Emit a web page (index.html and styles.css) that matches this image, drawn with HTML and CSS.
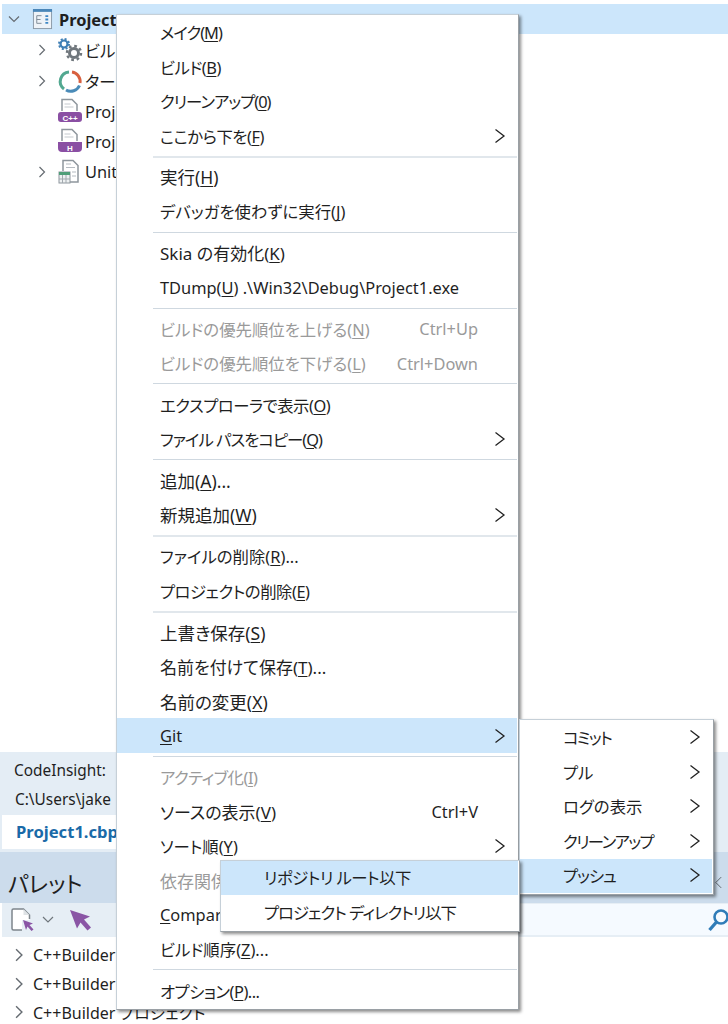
FILE: index.html
```html
<!DOCTYPE html>
<html lang="ja">
<head>
<meta charset="utf-8">
<title>Project context menu</title>
<link rel="stylesheet" href="styles.css">
</head>
<body>
<div class="page">
  <section class="tree">
    <div class="node node-selected">
      <svg class="chev chev-root" viewBox="0 0 12 12"><path d="M1 3.500l5 5 5-5"/></svg>
      <svg class="ico" viewBox="0 0 22 22"><rect x="1.500" y="1.500" width="19" height="19" fill="#eef3f8" stroke="#8b98a5"/><rect x="1" y="0" width="20" height="3" fill="#4a86b8"/><path d="M5 7h5M5 11h4M5 15h5M5 7v8" stroke="#7c8894" fill="none"/><path d="M14 6.500h3v2h-3zM14 10h3v2h-3zM14 13.500h3v2h-3z" fill="#3f88c5"/></svg>
      <span class="node-bold">Project1</span>
    </div>
    <div class="node">
      <svg class="chev" viewBox="0 0 12 12"><path d="M3.500 1l5 5-5 5"/></svg>
      <svg class="ico ico-wide" viewBox="0 0 26 24"><circle cx="7" cy="6" r="3.500" fill="none" stroke="#3f7fb5" stroke-width="2.200"/><circle cx="7" cy="6" r="5" fill="none" stroke="#3f7fb5" stroke-width="2" stroke-dasharray="2 1.930"/><circle cx="17" cy="15" r="4.500" fill="none" stroke="#6f767c" stroke-width="3"/><circle cx="17" cy="15" r="7" fill="none" stroke="#6f767c" stroke-width="2.500" stroke-dasharray="2.700 2.800"/></svg>
      <span class="label">ビルド構成</span>
    </div>
    <div class="node">
      <svg class="chev" viewBox="0 0 12 12"><path d="M3.500 1l5 5-5 5"/></svg>
      <svg class="ico ico-wide" viewBox="0 0 26 24"><g fill="none" stroke-width="3"><path d="M7 20A9.500 9.500 0 0 1 12 3" stroke="#52a890"/><path d="M15 3a9.500 9.500 0 0 1 8 11" stroke="#d8603f"/><path d="M22.500 16.500A9.500 9.500 0 0 1 9 21" stroke="#4a8bb8"/></g></svg>
      <span class="label">ターゲット</span>
    </div>
    <div class="node node-leaf">
      <svg class="ico ico-file" viewBox="0 0 26 26"><path d="M5 13V1.500h10l5 5V13" fill="#fff" stroke="#8e969d" stroke-width="1.500"/><path d="M7.500 6h6M7.500 9h9" stroke="#c4c9ce"/><rect x="1" y="14" width="24" height="10" rx="3" fill="#8a4fa3"/><text class="badge" x="13" y="22.500">C++</text></svg>
      <span class="label">Project1.cpp</span>
    </div>
    <div class="node node-leaf">
      <svg class="ico ico-file" viewBox="0 0 26 26"><path d="M5 13V1.500h10l5 5V13" fill="#fff" stroke="#8e969d" stroke-width="1.500"/><path d="M7.500 6h6M7.500 9h9" stroke="#c4c9ce"/><path d="M1 14h24v6a4 4 0 0 1-4 4H5a4 4 0 0 1-4-4z" fill="#8a4fa3"/><text class="badge" x="13" y="23">H</text></svg>
      <span class="label">Project1.h</span>
    </div>
    <div class="node">
      <svg class="chev" viewBox="0 0 12 12"><path d="M3.500 1l5 5-5 5"/></svg>
      <svg class="ico ico-file" viewBox="0 0 26 26"><path d="M6 12V1.500h10l5 5V23h-8" fill="#fff" stroke="#8e969d" stroke-width="1.500"/><path d="M9 5h5M9 8.500h9M15 13h4M15 17h4" stroke="#b5bbc1"/><rect x="2" y="13" width="11" height="11" fill="#eef1f2" stroke="#8e969d"/><rect x="2" y="13" width="11" height="3" fill="#4f9e78"/><path d="M5.500 16v8M9 16v8M2 20h11" stroke="#a2a9af"/></svg>
      <span class="label">Unit1.cpp</span>
    </div>
  </section>

  <section class="status">
    <div class="status-line">CodeInsight:</div>
    <div class="status-line status-path">C:\Users\jake</div>
    <div class="tab-row"><div class="tab">Project1.cbproj</div></div>
  </section>

  <section class="palette">
    <h2 class="palette-title">パレット</h2>
    <div class="palette-tools">
      <svg class="tool-new" viewBox="0 0 23 25"><path d="M12.500 1H2.500A1.500 1.500 0 0 0 1 2.500v18A1.500 1.500 0 0 0 2.500 22H11V12h7.500V7z" fill="#fff"/><path d="M11 22H2.500A1.500 1.500 0 0 1 1 20.500v-18A1.500 1.500 0 0 1 2.500 1h10l6 6v4" fill="none" stroke="#7d858c" stroke-width="1.500"/><path d="M12.500 1v6h6z" fill="#dfe3e6"/><path d="M12 12l10 3.500-3.500 1.500 4 4.500-2 1.500-4-4.500-1.500 3.500z" fill="#8a55a5"/></svg>
      <svg class="tool-drop" viewBox="0 0 12 8"><path d="M1 1l5 5 5-5"/></svg>
      <svg class="tool-arrow" viewBox="0 0 22 22"><path d="M1 1l20 6.500-6 3 7 8-3.500 3-7-8-3.500 6z" fill="#8a55a5"/></svg>
      <div class="search">
        <svg class="search-ico" viewBox="0 0 24 24"><circle cx="13" cy="9" r="6.500" fill="none" stroke="#2f7cb8" stroke-width="2.600"/><path d="M8.500 14l-7 8" stroke="#2f7cb8" stroke-width="3.400"/></svg>
      </div>
    </div>
    <ul class="groups">
      <li class="group"><svg class="chev" viewBox="0 0 12 12"><path d="M3.500 1l5 5-5 5"/></svg>C++Builder</li>
      <li class="group"><svg class="chev" viewBox="0 0 12 12"><path d="M3.500 1l5 5-5 5"/></svg>C++Builder</li>
      <li class="group"><svg class="chev" viewBox="0 0 12 12"><path d="M3.500 1l5 5-5 5"/></svg>C++Builder プロジェクト</li>
    </ul>
  </section>

  <svg class="collapse" viewBox="0 0 10 14"><path d="M8 1L2 7l6 6"/></svg>

  <nav class="menu menu-main">
    <div class="item"><span class="kana2">メイク(<u>M</u>)</span></div>
    <div class="item"><span class="kana1">ビルド(<u>B</u>)</span></div>
    <div class="item"><span class="kana2">クリーンアップ(<u>0</u>)</span></div>
    <div class="item"><span class="kana1">ここから下を(<u>F</u>)</span><svg class="arrow" viewBox="0 0 12 16"><path d="M1.500 1.500L10 8l-8.500 6.500"/></svg></div>
    <div class="sep sep-wide"></div>
    <div class="item"><span class="kanji">実行(<u>H</u>)</span></div>
    <div class="item"><span>デバッガを使わずに実行(<u>J</u>)</span></div>
    <div class="sep"></div>
    <div class="item"><span class="mid">Skia の有効化(<u>K</u>)</span></div>
    <div class="item"><span>TDump(<u>U</u>) .\Win32\Debug\Project1.exe</span></div>
    <div class="sep"></div>
    <div class="item item-off"><span>ビルドの優先順位を上げる(<u>N</u>)</span><span class="keys">Ctrl+Up</span></div>
    <div class="item item-off"><span>ビルドの優先順位を下げる(<u>L</u>)</span><span class="keys">Ctrl+Down</span></div>
    <div class="sep"></div>
    <div class="item"><span class="kana1">エクスプローラで表示(<u>O</u>)</span></div>
    <div class="item"><span class="kana2">ファイル パスをコピー(<u>Q</u>)</span><svg class="arrow" viewBox="0 0 12 16"><path d="M1.500 1.500L10 8l-8.500 6.500"/></svg></div>
    <div class="sep"></div>
    <div class="item"><span class="kanji">追加(<u>A</u>)...</span></div>
    <div class="item"><span class="kanji">新規追加(<u>W</u>)</span><svg class="arrow" viewBox="0 0 12 16"><path d="M1.500 1.500L10 8l-8.500 6.500"/></svg></div>
    <div class="sep sep-wide"></div>
    <div class="item"><span>ファイルの削除(<u>R</u>)...</span></div>
    <div class="item"><span class="kana1">プロジェクトの削除(<u>E</u>)</span></div>
    <div class="sep sep-wide"></div>
    <div class="item"><span class="kanji">上書き保存(<u>S</u>)</span></div>
    <div class="item"><span class="mid">名前を付けて保存(<u>T</u>)...</span></div>
    <div class="item"><span class="kanji">名前の変更(<u>X</u>)</span></div>
    <div class="item item-on"><span><u>G</u>it</span><svg class="arrow" viewBox="0 0 12 16"><path d="M1.500 1.500L10 8l-8.500 6.500"/></svg></div>
    <div class="sep"></div>
    <div class="item item-off"><span class="kana1">アクティブ化(<u>I</u>)</span></div>
    <div class="item"><span class="mid">ソースの表示(<u>V</u>)</span><span class="keys">Ctrl+V</span></div>
    <div class="item"><span>ソート順(<u>Y</u>)</span><svg class="arrow" viewBox="0 0 12 16"><path d="M1.500 1.500L10 8l-8.500 6.500"/></svg></div>
    <div class="item item-off"><span class="mid">依存関係</span></div>
    <div class="item"><span><u>C</u>ompare</span></div>
    <div class="item"><span>ビルド順序(<u>Z</u>)...</span></div>
    <div class="sep"></div>
    <div class="item"><span class="kana1">オプション(<u>P</u>)...</span></div>
  </nav>

  <nav class="menu menu-git">
    <div class="item"><span class="kana3">コミット</span><svg class="arrow" viewBox="0 0 12 16"><path d="M1.500 1.500L10 8l-8.500 6.500"/></svg></div>
    <div class="item"><span>プル</span><svg class="arrow" viewBox="0 0 12 16"><path d="M1.500 1.500L10 8l-8.500 6.500"/></svg></div>
    <div class="item"><span>ログの表示</span><svg class="arrow" viewBox="0 0 12 16"><path d="M1.500 1.500L10 8l-8.500 6.500"/></svg></div>
    <div class="item"><span class="kana3">クリーンアップ</span><svg class="arrow" viewBox="0 0 12 16"><path d="M1.500 1.500L10 8l-8.500 6.500"/></svg></div>
    <div class="item item-on"><span class="kana2">プッシュ</span><svg class="arrow" viewBox="0 0 12 16"><path d="M1.500 1.500L10 8l-8.500 6.500"/></svg></div>
  </nav>

  <nav class="menu menu-push">
    <div class="item item-on"><span class="kana1">リポジトリ ルート以下</span></div>
    <div class="item"><span class="kana2">プロジェクト ディレクトリ以下</span></div>
  </nav>
</div>
</body>
</html>
```
FILE: styles.css
```css
* { box-sizing: border-box; }
html, body { margin: 0; padding: 0; background: #fff; }
body {
  font-family: "Noto Sans", "Noto Sans CJK JP", sans-serif;
  font-size: 16px;
  color: #1f1f1f;
  font-feature-settings: "palt";
}
.page {
  position: relative;
  width: 728px;
  height: 1024px;
  overflow: hidden;
  display: flex;
  flex-direction: column;
}

/* project tree */
.tree { height: 752px; padding: 4px 0 0 2px; font-size: 16.400px; }
.node {
  display: flex;
  align-items: center;
  height: 30.300px;
  padding-left: 34px;
  white-space: nowrap;
}
.node-selected { background: #cce6fb; padding-left: 6px; margin-bottom: 1px; }
.node-leaf { padding-left: 55px; }
.node-bold { font-weight: 700; margin-left: 6px; width: 57px; overflow: hidden; }
.label { width: 31px; overflow: hidden; }
.chev { width: 12px; height: 12px; flex: none; margin-right: 6px; }
.chev path { fill: none; stroke: #666c72; stroke-width: 1.200; }
.chev-root { margin-right: 12px; }
.ico { width: 21px; height: 21px; flex: none; }
.ico-wide { width: 26px; height: 24px; margin-left: 3px; margin-right: 2px; }
.ico-file { width: 26px; height: 26px; margin-right: 2px; flex: none; }
.node:not(.node-leaf) .ico-file { margin-left: 3px; }
.badge { font: 700 8px "Liberation Sans", sans-serif; fill: #fff; text-anchor: middle; }

/* status */
.status { background: #e4edf5; height: 100px; padding: 5px 0 0 2px; }
.status-line { height: 29px; line-height: 28px; padding-left: 12px; font-size: 15.400px; white-space: nowrap; width: 114px; overflow: hidden; }
.status-path { padding-left: 13px; }
.tab-row { height: 34px; }
.tab {
  width: 114px;
  height: 34px;
  line-height: 34px;
  background: #fff;
  padding-left: 14px;
  color: #1a6aa8;
  font-weight: 700;
  font-size: 16.600px;
  white-space: nowrap;
  overflow: hidden;
}

/* palette */
.palette { flex: 1; min-height: 0; padding-left: 2px; }
.palette-title {
  margin: 0 0 0 -2px;
  height: 51px;
  background: #ccdcec;
  padding: 13px 0 0 8px;
  font-size: 22px;
  font-weight: 400;
  line-height: 36px;
}
.palette-tools {
  display: flex;
  align-items: center;
  height: 34px;
  background: #e6eef5;
  padding-left: 9px;
}
.tool-new { width: 23px; height: 25px; flex: none; }
.tool-drop { width: 12px; height: 8px; margin-left: 8px; flex: none; }
.tool-drop path { fill: none; stroke: #6f767c; stroke-width: 1.200; }
.tool-arrow { width: 22px; height: 22px; margin-left: 15px; flex: none; }
.search {
  margin-left: auto;
  width: 250px;
  height: 31px;
  background: #f5faff;
  display: flex;
  align-items: center;
  justify-content: flex-start;
  align-self: flex-start;
  padding-left: 230px;
  margin-top: 1px;
}
.search-ico { width: 24px; height: 24px; flex: none; }
.groups { list-style: none; margin: 0; padding: 4px 0 0 10px; }
.group { display: flex; align-items: center; height: 28.500px; white-space: nowrap; }
.group .chev { width: 14px; height: 14px; margin-right: 7px; }

.collapse { position: absolute; left: 714px; top: 876px; width: 9px; height: 13px; }
.collapse path { fill: none; stroke: #5f666c; stroke-width: 1.100; }

/* menus */
.menu {
  position: absolute;
  background: #fff;
  border: 1px solid #c6d0d8;
  border-right-color: #9aa0a5;
  border-bottom-color: #9aa0a5;
  padding: 0 1px 1px 0;
  box-shadow: 2px 2px 3px rgba(0, 0, 0, .45);
  white-space: nowrap;
  font-size: 16.400px;
}
.menu-main { left: 116px; top: 14px; width: 403px; }
.menu-git { left: 519px; top: 719px; width: 195px; padding-top: 1px; }
.menu-push { left: 220px; top: 860px; width: 300px; }
.item {
  display: flex;
  align-items: center;
  height: 34.450px;
  padding-left: 43px;
}
.menu-git .item, .menu-push .item { padding-bottom: 2px; }
.item u { text-underline-offset: 2px; text-decoration-thickness: 1px; }
.item-on { background: #cce6fb; }
.item-off { color: #9a9a9a; }
.kana1 { letter-spacing: -.5px; }
.kana2 { letter-spacing: -1px; }
.kana3 { letter-spacing: -1.600px; }
.mid { font-size: 17px; }
.kanji { font-size: 17.500px; }
.keys { margin-left: auto; margin-right: 39px; }
.arrow {
  width: 12px;
  height: 16px;
  margin-left: auto;
  margin-right: 11px;
  flex: none;
}
.arrow path { fill: none; stroke: #222; stroke-width: 1.300; }
.sep { height: 7px; margin-left: 36px; padding-top: 3px; }
.sep::before { content: ""; display: block; height: 1px; background: #cfd8e0; }
.sep-wide::before { height: 2px; background: #e1e7ec; }
```
